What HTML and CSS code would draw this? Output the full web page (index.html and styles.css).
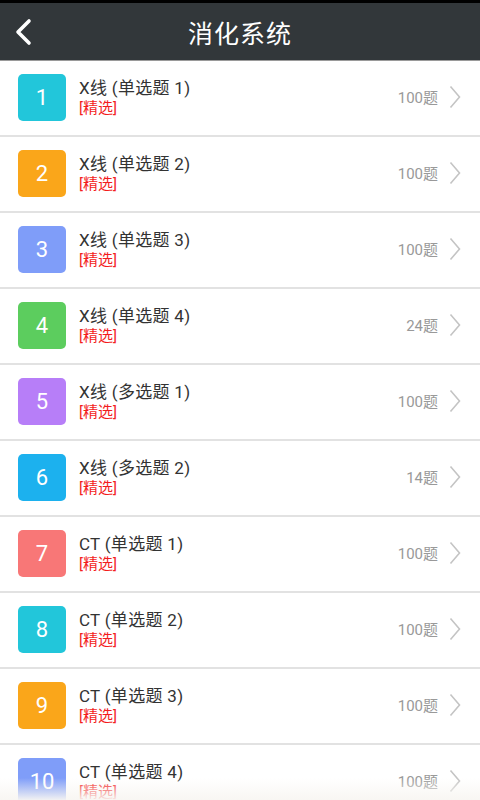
FILE: index.html
```html
<!DOCTYPE html>
<html lang="zh-CN">
<head>
    <meta charset="UTF-8">
    <meta name="viewport" content="width=device-width, initial-scale=1.0">
    <title>消化系统</title>
    <link rel="stylesheet" href="styles.css">
</head>
<body>
    <div id="app">
        <div class="statusbar"></div>
        <div class="header">
            <span class="back">
                <svg width="20" height="28" viewBox="0 0 20 28"><path d="M16 3 L5 14 L16 25" fill="none" stroke="#fff" stroke-width="3.6" stroke-linecap="round" stroke-linejoin="round"/></svg>
            </span>
            <h1>消化系统</h1>
        </div>

        <ul class="list">
            <li class="item">
                <span class="badge c-cyan">1</span>
                <div class="info"><div class="title">X线 (单选题 1)</div><div class="tag">[精选]</div></div>
                <span class="count">100题</span>
                <span class="arrow"><svg width="12" height="24" viewBox="0 0 12 24"><path d="M1.5 1.5 L10.5 12 L1.5 22.5" fill="none" stroke="#c4c4c4" stroke-width="1.6"/></svg></span>
            </li>
            <li class="item">
                <span class="badge c-orange">2</span>
                <div class="info"><div class="title">X线 (单选题 2)</div><div class="tag">[精选]</div></div>
                <span class="count">100题</span>
                <span class="arrow"><svg width="12" height="24" viewBox="0 0 12 24"><path d="M1.5 1.5 L10.5 12 L1.5 22.5" fill="none" stroke="#c4c4c4" stroke-width="1.6"/></svg></span>
            </li>
            <li class="item">
                <span class="badge c-blue">3</span>
                <div class="info"><div class="title">X线 (单选题 3)</div><div class="tag">[精选]</div></div>
                <span class="count">100题</span>
                <span class="arrow"><svg width="12" height="24" viewBox="0 0 12 24"><path d="M1.5 1.5 L10.5 12 L1.5 22.5" fill="none" stroke="#c4c4c4" stroke-width="1.6"/></svg></span>
            </li>
            <li class="item">
                <span class="badge c-green">4</span>
                <div class="info"><div class="title">X线 (单选题 4)</div><div class="tag">[精选]</div></div>
                <span class="count">24题</span>
                <span class="arrow"><svg width="12" height="24" viewBox="0 0 12 24"><path d="M1.5 1.5 L10.5 12 L1.5 22.5" fill="none" stroke="#c4c4c4" stroke-width="1.6"/></svg></span>
            </li>
            <li class="item">
                <span class="badge c-purple">5</span>
                <div class="info"><div class="title">X线 (多选题 1)</div><div class="tag">[精选]</div></div>
                <span class="count">100题</span>
                <span class="arrow"><svg width="12" height="24" viewBox="0 0 12 24"><path d="M1.5 1.5 L10.5 12 L1.5 22.5" fill="none" stroke="#c4c4c4" stroke-width="1.6"/></svg></span>
            </li>
            <li class="item">
                <span class="badge c-sky">6</span>
                <div class="info"><div class="title">X线 (多选题 2)</div><div class="tag">[精选]</div></div>
                <span class="count">14题</span>
                <span class="arrow"><svg width="12" height="24" viewBox="0 0 12 24"><path d="M1.5 1.5 L10.5 12 L1.5 22.5" fill="none" stroke="#c4c4c4" stroke-width="1.6"/></svg></span>
            </li>
            <li class="item">
                <span class="badge c-red">7</span>
                <div class="info"><div class="title">CT (单选题 1)</div><div class="tag">[精选]</div></div>
                <span class="count">100题</span>
                <span class="arrow"><svg width="12" height="24" viewBox="0 0 12 24"><path d="M1.5 1.5 L10.5 12 L1.5 22.5" fill="none" stroke="#c4c4c4" stroke-width="1.6"/></svg></span>
            </li>
            <li class="item">
                <span class="badge c-cyan">8</span>
                <div class="info"><div class="title">CT (单选题 2)</div><div class="tag">[精选]</div></div>
                <span class="count">100题</span>
                <span class="arrow"><svg width="12" height="24" viewBox="0 0 12 24"><path d="M1.5 1.5 L10.5 12 L1.5 22.5" fill="none" stroke="#c4c4c4" stroke-width="1.6"/></svg></span>
            </li>
            <li class="item">
                <span class="badge c-orange">9</span>
                <div class="info"><div class="title">CT (单选题 3)</div><div class="tag">[精选]</div></div>
                <span class="count">100题</span>
                <span class="arrow"><svg width="12" height="24" viewBox="0 0 12 24"><path d="M1.5 1.5 L10.5 12 L1.5 22.5" fill="none" stroke="#c4c4c4" stroke-width="1.6"/></svg></span>
            </li>
            <li class="item">
                <span class="badge c-blue">10</span>
                <div class="info"><div class="title">CT (单选题 4)</div><div class="tag">[精选]</div></div>
                <span class="count">100题</span>
                <span class="arrow"><svg width="12" height="24" viewBox="0 0 12 24"><path d="M1.5 1.5 L10.5 12 L1.5 22.5" fill="none" stroke="#c4c4c4" stroke-width="1.6"/></svg></span>
            </li>
        </ul>

        <div class="fade"></div>
    </div>
</body>
</html>
```

FILE: styles.css
```css
body {
    margin: 0;
    padding: 0;
    background-color: #fff;
    font-family: Roboto, "Noto Sans CJK SC", sans-serif;
}

#app {
    position: relative;
    width: 480px;
    height: 800px;
    overflow: hidden;
}

.statusbar {
    height: 3px;
    background-color: #000;
}

.header {
    height: 57px;
    background-color: #32373a;
    border-bottom: 1px solid #9a9a9a;
    display: flex;
    align-items: center;
    justify-content: center;
    position: relative;
}

.header h1 {
    margin: 0;
    color: #fff;
    font-size: 25px;
    font-weight: normal;
    letter-spacing: 1px;
}

.back {
    position: absolute;
    left: 13px;
    top: 15px;
}

.list {
    list-style: none;
    margin: 0;
    padding: 0;
}

.item {
    height: 74px;
    border-bottom: 2px solid #e2e2e2;
    display: flex;
    align-items: center;
    padding: 0 19px 0 18px;
}

.badge {
    width: 48px;
    height: 47px;
    border-radius: 5px;
    color: #fff;
    font-size: 22px;
    display: flex;
    align-items: center;
    justify-content: center;
    flex-shrink: 0;
    margin-top: -1px;
}

.c-cyan { background-color: #22c6da; }
.c-orange { background-color: #faa61a; }
.c-blue { background-color: #7f9df9; }
.c-green { background-color: #5ccd5e; }
.c-purple { background-color: #b77ef8; }
.c-sky { background-color: #1cb1ee; }
.c-red { background-color: #f87777; }

.info {
    flex: 1;
    margin-left: 13px;
    margin-top: -2px;
}

.title {
    font-size: 17px;
    color: #333;
    line-height: 20px;
    letter-spacing: 0.3px;
}

.tag {
    font-size: 15px;
    color: #f31d1d;
    line-height: 17px;
    margin-top: 2px;
}

.count {
    font-size: 15px;
    color: #999;
    margin-right: 11px;
    margin-top: -3px;
}

.arrow {
    display: flex;
    margin-top: -2px;
}

.fade {
    position: absolute;
    left: 0;
    right: 0;
    bottom: 0;
    height: 22px;
    background: linear-gradient(to bottom, rgba(255, 255, 255, 0), rgba(248, 246, 242, 0.95));
}
```
